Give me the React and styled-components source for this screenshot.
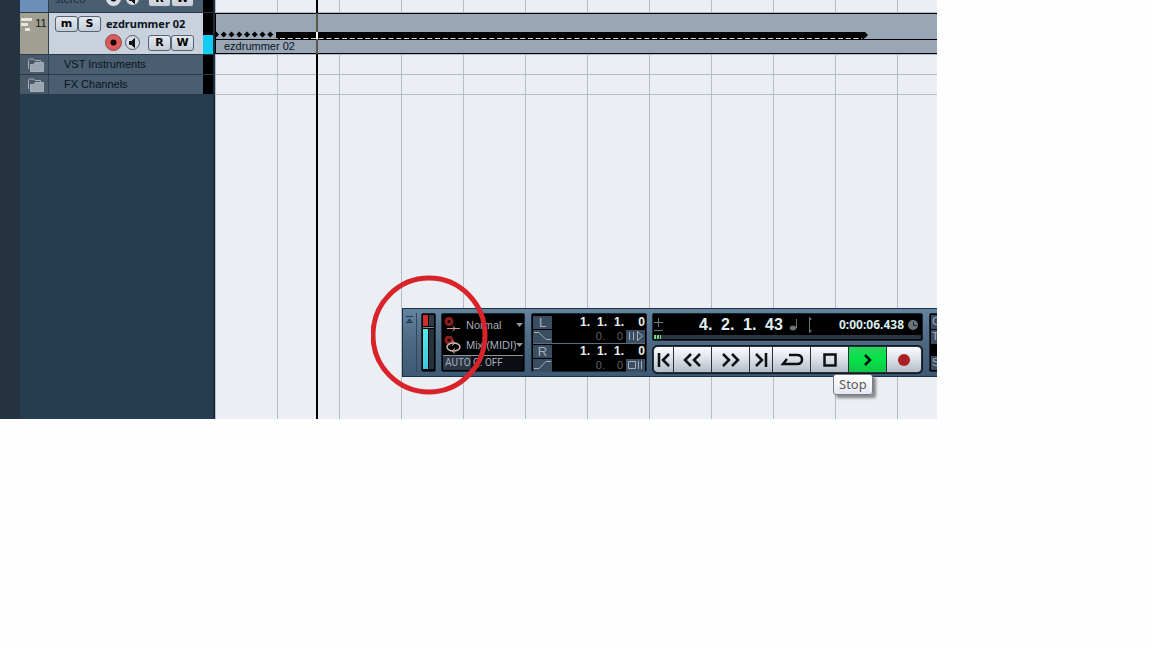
import React, { useState } from 'react'
import styled, { createGlobalStyle } from 'styled-components'

const GlobalStyle = createGlobalStyle`
    * { box-sizing: border-box; }
    body {
        margin: 0;
        background: #fefefe;
        font-family: "Liberation Sans", Arial, sans-serif;
        font-size: 11px;
        color: #0b1420;
    }
    button, select { font-family: inherit; margin: 0; }
`

const Page = styled.main`
    padding-right: 215px;
`
const Project = styled.div`
    display: flex;
    overflow: hidden;
`

/* track list */
const Sidebar = styled.aside`
    flex: none;
    width: 215px;
    padding-left: 20px;
    border-right: 2px solid #1d2c3b;
    background: linear-gradient(90deg, #253340 20px, #263c50 20px);
`
const TrackRow = styled.div`
    display: flex;
    height: ${p => p.$height}px;
    overflow: hidden;
    border-bottom: 1px solid #2a3947;
`
const TrackIcon = styled.div`
    display: flex;
    flex: none;
    width: 29px;
    gap: 2px;
    justify-content: center;
    align-items: ${p => p.$numbered ? 'flex-start' : 'center'};
    padding: ${p => p.$numbered ? '4px 0 0' : '0 0 0 4px'};
    border-right: 1px solid #33414e;
    background: ${p => p.$color};
`
const TrackNumber = styled.span`
    font-size: 11px;
    line-height: 12px;
`
const TrackBody = styled.div`
    display: flex;
    flex: 1;
    flex-direction: column;
    justify-content: ${p => p.$cut ? 'flex-end' : 'flex-start'};
    gap: 2px;
    padding: ${p => p.$cut ? '0 0 5px 6px' : '2px 0 0 6px'};
    background: ${p => p.$selected ? '#c9d1dc' : '#4a5e71'};
`
const FolderName = styled.span`
    padding-left: 9px;
    line-height: 14px;
`
const TrackLine = styled.div`
    display: flex;
    flex: none;
    align-items: center;
    height: 17px;
`
const TrackName = styled.strong`
    padding-left: 5px;
    font-family: "Noto Sans", sans-serif;
    font-size: 11px;
    line-height: 16px;
    white-space: nowrap;
`
const Stereo = styled.span`
    width: 50px;
    color: #1d2b3a;
    line-height: 16px;
`
const Spacer = styled.span`
    width: 50px;
`
const SmallButton = styled.button`
    width: 23px;
    height: 16px;
    padding: 0;
    border: 1px solid #566373;
    border-radius: 3px;
    background: linear-gradient(#e4e9ef, #c5cdd7);
    font-family: "DejaVu Sans", sans-serif;
    font-size: 11px;
    font-weight: bold;
    line-height: 13px;
    color: #000;
`
const RoundButton = styled.button`
    display: flex;
    width: ${p => p.$size}px;
    height: ${p => p.$size}px;
    margin-right: 3px;
    padding: 0;
    align-items: center;
    justify-content: center;
    border: 1px solid ${p => p.$armed ? '#8d4a4d' : '#4e5a68'};
    border-radius: 50%;
    background: ${p => p.$armed ? '#dd5b5d' : '#d5dbe3'};
`
const ButtonPair = styled.span`
    display: flex;
    padding-left: 5px;
`
const LevelMeter = styled.div`
    display: flex;
    flex: none;
    width: 10px;
    flex-direction: column;
    justify-content: flex-end;
    background: #000;
`
const Level = styled.div`
    height: 19px;
    background: #12cdf2;
`

/* event display */
const Arrange = styled.section`
    flex: 1;
    min-width: 0;
    position: relative;
    padding-top: 13px;
    background: linear-gradient(90deg, #b2bdc7 1px, transparent 1px) 0 0 / 62px 100%, #ebeff3;
`
const Part = styled.div`
    border: 1px solid #000;
    border-right: 0;
    background: #98a6b5;
    box-shadow: 0 1px #b2bdc7, 0 -1px #b2bdc7;
`
const Notes = styled.svg`
    display: block;
    height: 25px;
    width: 100%;
`
const PartName = styled.div`
    height: 14px;
    padding-left: 8px;
    border-top: 1px solid #000;
    line-height: 13px;
`
const Lane = styled.div`
    height: ${p => p.$height}px;
    border-bottom: 1px solid #b2bdc7;
`
const Cursor = styled.div`
    position: absolute;
    top: 0;
    bottom: 0;
    left: 101px;
    width: 2px;
    background: linear-gradient(#000 13px, #5a5348 13px 32px, #fff 32px 39px, #5a5348 39px 54px, #000 54px);
`
const Desk = styled.div`
    padding: 213px 0 42px 187px;
`
const Floating = styled.div`
    position: relative;
`
const Highlight = styled.svg`
    position: absolute;
    left: -31px;
    top: -33px;
    pointer-events: none;
`
const Tooltip = styled.div`
    position: absolute;
    left: 431px;
    top: 66px;
    padding: 0 5px;
    border: 1px solid #777b82;
    border-radius: 3px;
    background: linear-gradient(#fff, #e6e8f2);
    box-shadow: 3px 3px 3px rgba(60, 60, 60, 0.6);
    font-family: "Noto Sans", sans-serif;
    font-size: 13px;
    line-height: 19px;
    color: #5a5a5a;
`

/* transport */
const Panel = styled.div`
    display: flex;
    height: 69px;
    padding-top: 4px;
    overflow: hidden;
    border: 1px solid #1d2f40;
    border-right: 0;
    background: linear-gradient(#64839f, #4c6882 50%, #3e5973);
`
const Handle = styled.div`
    flex: none;
    width: 14px;
    height: 59px;
    padding-left: 3px;
    border-right: 1px solid #30475c;
`
const Box = styled.div`
    flex: none;
    width: ${p => p.$width}px;
    height: ${p => p.$height || 59}px;
    margin-left: ${p => p.$gap || 0}px;
    padding: 1px;
    border: 1px solid #1b2834;
    border-radius: 2px;
    background: #000;
`
const Activity = styled(Box)`
    display: grid;
    grid-template-columns: 5px 5px;
    grid-template-rows: 11px 1px 40px;
    gap: 1px;
`
const Bar = styled.span`
    background: ${p => p.$color};
`
const ActivityLine = styled.span`
    grid-column: span 2;
    background: #7b8b86;
`
const ModeRow = styled.label`
    display: flex;
    height: 20px;
    align-items: center;
`
const ModeSelect = styled.select`
    width: 50px;
    padding: 0;
    margin-left: 5px;
    border: 0;
    appearance: none;
    background: transparent;
    color: #a7afb9;
    font-size: 11px;
    line-height: 16px;
`
const AutoQ = styled.button`
    display: block;
    width: 100%;
    height: 15px;
    padding: 0 2px;
    border: 0;
    border-top: 1px solid #8a949e;
    background: linear-gradient(90deg, #2b3644 28px, #0a0e13 28px);
    color: #a7afb9;
    font-family: Roboto, sans-serif;
    font-size: 10px;
    line-height: 14px;
    text-align: left;
`
const Locator = styled.div`
    display: flex;
    height: 14px;
    align-items: center;
    color: ${p => p.$dim ? '#5d6266' : '#e9efef'};
    font-size: ${p => p.$dim ? 11 : 12}px;
    font-weight: ${p => p.$dim ? 'normal' : 'bold'};
    line-height: 14px;
`
const LocatorButton = styled.button`
    display: flex;
    flex: none;
    width: 19px;
    height: 13px;
    padding: 0;
    align-items: center;
    justify-content: center;
    border: 0;
    background: #3b4d60;
    color: #a3b1bf;
    font-size: 13px;
    line-height: 13px;
`
const Digits = styled.span`
    display: flex;
    flex: 1;
    justify-content: flex-end;
    padding-right: ${p => p.$dim ? 3 : 0}px;
`
const Digit = styled.span`
    width: ${p => p.$width}px;
    text-align: right;
`
const Divider = styled.div`
    height: 1px;
    background: #5f6d79;
`
const Main = styled.div`
    display: flex;
    flex: none;
    flex-direction: column;
    gap: 4px;
    margin-left: 5px;
`
const Display = styled(Box)`
    display: flex;
    flex-direction: column;
`
const DisplayRow = styled.div`
    display: flex;
    flex: 1;
    align-items: center;
    padding-right: 3px;
`
const Position = styled.span`
    display: flex;
    flex: 1;
    padding-left: 36px;
    font-size: 16px;
    font-weight: bold;
    line-height: 18px;
    color: #dff0ee;
`
const Count = styled.span`
    min-width: 22px;
`
const Clock = styled.span`
    padding: 0 4px 0 26px;
    font-family: "Noto Sans", sans-serif;
    font-size: 12px;
    font-weight: bold;
    line-height: 18px;
    color: #d8ebec;
`
const Scrub = styled.div`
    height: 4px;
    background: repeating-linear-gradient(90deg, #6fdc8a 0 2px, #183225 2px 3px) 0 0 / 7px 4px no-repeat, #2c3542;
`
const Buttons = styled.div`
    display: flex;
    height: 29px;
    padding: 1px;
    gap: 1px;
    border: 1px solid #101820;
    border-radius: 5px;
    background: #27313b;
    overflow: hidden;
`
const TransportButton = styled.button`
    display: flex;
    width: ${p => p.$width}px;
    padding: 0;
    align-items: center;
    justify-content: center;
    border: 0;
    border-radius: ${p => p.$radius || 0};
    background: ${p => p.$active
        ? 'linear-gradient(#29d35c, #05e548 45%, #12c646)'
        : 'linear-gradient(#fafbfd, #dfe3e9 45%, #b4bdc8)'};
`
const Extra = styled.div`
    display: flex;
    flex: none;
    width: 24px;
    height: 59px;
    margin-left: 6px;
    padding: 1px;
    flex-direction: column;
    gap: 1px;
    border: 1px solid #1b2834;
    border-radius: 2px;
    background: #000;
`
const ExtraCell = styled.span`
    height: ${p => p.$height}px;
    padding-left: 1px;
    background: ${p => p.$off ? '#000' : '#3b4d60'};
    color: #a3b1bf;
    line-height: 13px;
`

const Icon = ({ w, h, d, color = '#0d1013', line = 2, fill = 'none', children }) => (
    <svg width={w} height={h} viewBox={`0 0 ${w} ${h}`} fill={fill} stroke={color} strokeWidth={line} aria-hidden="true">
        {d && <path d={d} />}
        {children}
    </svg>
)

const Folder = () => (
    <Icon w={16} h={14} line={1} color="#a4afb9">
        <path d="M.5 11V2.500l1-1.500h4l1.500 1.500h5.500l.5 2" />
        <path fill="#99a4ae" d="M2.500 13.500v-7h3l1.500-2h8.500v9z" />
    </Icon>
)

const Speaker = () => (
    <Icon w={9} h={10} line={1} fill="#111" d="M1.500 3.500h2l3-3v9l-3-3h-2z" />
)

const RecordMode = ({ cycle }) => (
    <Icon w={18} h={18} line={1} color="#b1514b">
        <circle cx="6" cy={cycle ? 4 : 5.5} r="3" stroke="#8f1d1b" strokeWidth="3" />
        {cycle
            ? (
                <g stroke="#cfb3ae">
                    <ellipse cx="10.500" cy="11" rx="6.500" ry="4" strokeWidth="1.500" />
                    <path d="M9 4.500l3 2.500-3 2.500M12 12.500l-3 2.500 3 2.500" />
                </g>
            )
            : <path stroke="#cf9a94" d="M4 12.500h13M9.500 10l3 2.500-3 2.500" />}
    </Icon>
)

const Arrow = () => <Icon w={7} h={4} line={0} fill="#8d959e" d="M0 0h7l-3.500 4z" />

const TrackControls = ({ armed }) => (
    <>
        <RoundButton $size={17} $armed={armed} aria-label="Record enable">
            <Icon w={7} h={7} line={0}><circle cx="3.500" cy="3.500" r="3" fill="#150608" /></Icon>
        </RoundButton>
        <RoundButton $size={15} aria-label="Monitor"><Speaker /></RoundButton>
        <ButtonPair>
            <SmallButton>R</SmallButton>
            <SmallButton>W</SmallButton>
        </ButtonPair>
    </>
)

const LocatorRows = ({ name, punch, punchIcon, side, sideIcon }) => (
    <>
        <Locator>
            <LocatorButton>{name}</LocatorButton>
            <Digits>
                <Digit $width={17}>1.</Digit>
                <Digit $width={17}>1.</Digit>
                <Digit $width={17}>1.</Digit>
                <Digit $width={21}>0</Digit>
            </Digits>
        </Locator>
        <Locator $dim>
            <LocatorButton aria-label={punch}>
                <Icon w={17} h={10} line={1} color="#a3b1bf" d={punchIcon} />
            </LocatorButton>
            <Digits $dim>
                <Digit $width={17}>0.</Digit>
                <Digit $width={18}>0</Digit>
            </Digits>
            <LocatorButton aria-label={side}>
                <Icon w={15} h={10} line={1} color="#a3b1bf" d={sideIcon} />
            </LocatorButton>
        </Locator>
    </>
)

const hihats = Array.from({ length: 8 }, (_, i) => i * 7.75)

const diamond = x => `M${x - 3} 20.500l3-3 3 3-3 3z`

const transport = [
    { name: 'Go to start', width: 19, w: 14, h: 16, d: 'M2 1v14M12 2L6 8l6 6', radius: '4px 0 0 4px' },
    { name: 'Rewind', width: 37, w: 22, h: 16, d: 'M9 2L3 8l6 6M18 2l-6 6 6 6' },
    { name: 'Forward', width: 37, w: 20, h: 16, d: 'M2 2l6 6-6 6M11 2l6 6-6 6' },
    { name: 'Go to end', width: 22, w: 14, h: 16, d: 'M2 2l6 6-6 6M12 1v14' },
    { name: 'Cycle', width: 37, w: 24, h: 14, d: 'M9 2h8q5 0 5 4.500T17 11H3l4-5' },
    { name: 'Stop', width: 37, w: 14, h: 14, d: 'M1.500 1.500h11v11h-11z' },
    { name: 'Play', width: 37, w: 10, h: 14, d: 'M2 2l5 5-5 5', active: true },
]

export default function App() {
    const [mode, setMode] = useState('Normal')
    const [cycle, setCycle] = useState('Mix (MIDI)')

    return (
        <Page>
            <GlobalStyle />
            <Project>
                <Sidebar>
                    <TrackRow $height={13}>
                        <TrackIcon $color="#6c8fba" />
                        <TrackBody $cut>
                            <TrackLine>
                                <Stereo>stereo</Stereo>
                                <TrackControls />
                            </TrackLine>
                        </TrackBody>
                        <LevelMeter />
                    </TrackRow>
                    <TrackRow $height={42}>
                        <TrackIcon $color="#a09f91" $numbered>
                            <Icon w={12} h={14} line={0} fill="#e5e5df" d="M0 1h11v3H0zM0 6h7v3H0zM4 11h5v3H4z" />
                            <TrackNumber>11</TrackNumber>
                        </TrackIcon>
                        <TrackBody $selected>
                            <TrackLine>
                                <SmallButton>m</SmallButton>
                                <SmallButton>S</SmallButton>
                                <TrackName>ezdrummer 02</TrackName>
                            </TrackLine>
                            <TrackLine>
                                <Spacer />
                                <TrackControls armed />
                            </TrackLine>
                        </TrackBody>
                        <LevelMeter><Level /></LevelMeter>
                    </TrackRow>
                    {['VST Instruments', 'FX Channels'].map(name => (
                        <TrackRow $height={20} key={name}>
                            <TrackIcon $color="#4a5969"><Folder /></TrackIcon>
                            <TrackBody><FolderName>{name}</FolderName></TrackBody>
                            <LevelMeter />
                        </TrackRow>
                    ))}
                </Sidebar>

                <Arrange>
                    <Part>
                        <Notes>
                            {hihats.map(x => <path key={x} d={diamond(x)} />)}
                            <path d="M60 18h589l3 3-3 3H60z" />
                            <path d="M62 24.500h586" stroke="#000" />
                            <path d="M64 24.500h582" stroke="#d6dce1" strokeDasharray="5 2.750" />
                        </Notes>
                        <PartName>ezdrummer 02</PartName>
                    </Part>
                    <Lane $height={21} />
                    <Lane $height={20} />
                    <Cursor />
                    <Desk>
                        <Floating>
                            <Panel>
                                <Handle>
                                    <Icon w={7} h={7} line={1} color="#22364a">
                                        <path d="M0 .5h7M0 6.500h7" />
                                        <path d="M1 5.500l2.500-3 2.500 3z" fill="#22364a" stroke="none" />
                                    </Icon>
                                </Handle>
                                <Activity $width={15} $gap={4}>
                                    <Bar $color="#d32c2c" />
                                    <Bar $color="#303b48" />
                                    <ActivityLine />
                                    <Bar $color="linear-gradient(#58e8e4, #3fc8e6)" />
                                    <Bar $color="#26323e" />
                                </Activity>
                                <Box $width={84} $gap={5}>
                                    <ModeRow>
                                        <RecordMode />
                                        <ModeSelect aria-label="Linear record mode" value={mode} onChange={e => setMode(e.target.value)}>
                                            <option>Normal</option>
                                            <option>Merge</option>
                                        </ModeSelect>
                                        <Arrow />
                                    </ModeRow>
                                    <ModeRow>
                                        <RecordMode cycle />
                                        <ModeSelect aria-label="Cycle record mode" value={cycle} onChange={e => setCycle(e.target.value)}>
                                            <option>Mix (MIDI)</option>
                                            <option>Overwrite</option>
                                        </ModeSelect>
                                        <Arrow />
                                    </ModeRow>
                                    <AutoQ>AUTO Q: OFF</AutoQ>
                                </Box>
                                <Box $width={116} $gap={6}>
                                    <LocatorRows
                                        name="L"
                                        punch="Punch in"
                                        punchIcon="M0 1.500h5l7 7h5"
                                        side="Preroll"
                                        sideIcon="M1.500 1v8M5.500 1v8M9.500 .5v9l5-4.500z"
                                    />
                                    <Divider />
                                    <LocatorRows
                                        name="R"
                                        punch="Punch out"
                                        punchIcon="M0 8.500h5l7-7h5"
                                        side="Postroll"
                                        sideIcon="M.5 1.500h7v7h-7zM10.500 1v8M13.500 1v8"
                                    />
                                </Box>
                                <Main>
                                    <Display $width={271} $height={28}>
                                        <DisplayRow>
                                            <Icon w={9} h={15} line={1} color="#6b7780" d="M0 4.500h9M4.500 0v9M0 12.500h9" />
                                            <Position>
                                                <Count>4.</Count>
                                                <Count>2.</Count>
                                                <Count>1.</Count>
                                                <Count>43</Count>
                                            </Position>
                                            <Icon w={24} h={18} line={1} color="#66747b">
                                                <ellipse cx="4" cy="12" rx="3" ry="2" fill="#66747b" />
                                                <path d="M7.500 12V3M20.500 1v16" />
                                                <path d="M20 1l3 2-3 2zM20 13l3 2-3 2z" fill="#66747b" stroke="none" />
                                            </Icon>
                                            <Clock>0:00:06.438</Clock>
                                            <Icon w={10} h={10} line={1} color="#1a242a">
                                                <circle cx="5" cy="5" r="5" fill="#66747b" stroke="none" />
                                                <path d="M5.500 2v3.500H9" />
                                            </Icon>
                                        </DisplayRow>
                                        <Scrub />
                                    </Display>
                                    <Buttons>
                                        {transport.map(b => (
                                            <TransportButton key={b.name} $width={b.width} $active={b.active} $radius={b.radius} aria-label={b.name}>
                                                <Icon w={b.w} h={b.h} d={b.d} line={2.5} />
                                            </TransportButton>
                                        ))}
                                        <TransportButton $width={34} $radius="0 4px 4px 0" aria-label="Record">
                                            <Icon w={14} h={14} line={0}><circle cx="7" cy="7" r="6" fill="#ab1f25" /></Icon>
                                        </TransportButton>
                                    </Buttons>
                                </Main>
                                <Extra>
                                    <ExtraCell $height={14}>C</ExtraCell>
                                    <ExtraCell $height={14}>T</ExtraCell>
                                    <ExtraCell $height={10} $off />
                                    <ExtraCell $height={14}>S</ExtraCell>
                                </Extra>
                            </Panel>
                            <Highlight width="118" height="120" fill="none" stroke="#d8232a" strokeWidth="5">
                                <ellipse cx="58" cy="60" rx="56" ry="57" />
                            </Highlight>
                            <Tooltip role="tooltip">Stop</Tooltip>
                        </Floating>
                    </Desk>
                </Arrange>
            </Project>
        </Page>
    )
}
